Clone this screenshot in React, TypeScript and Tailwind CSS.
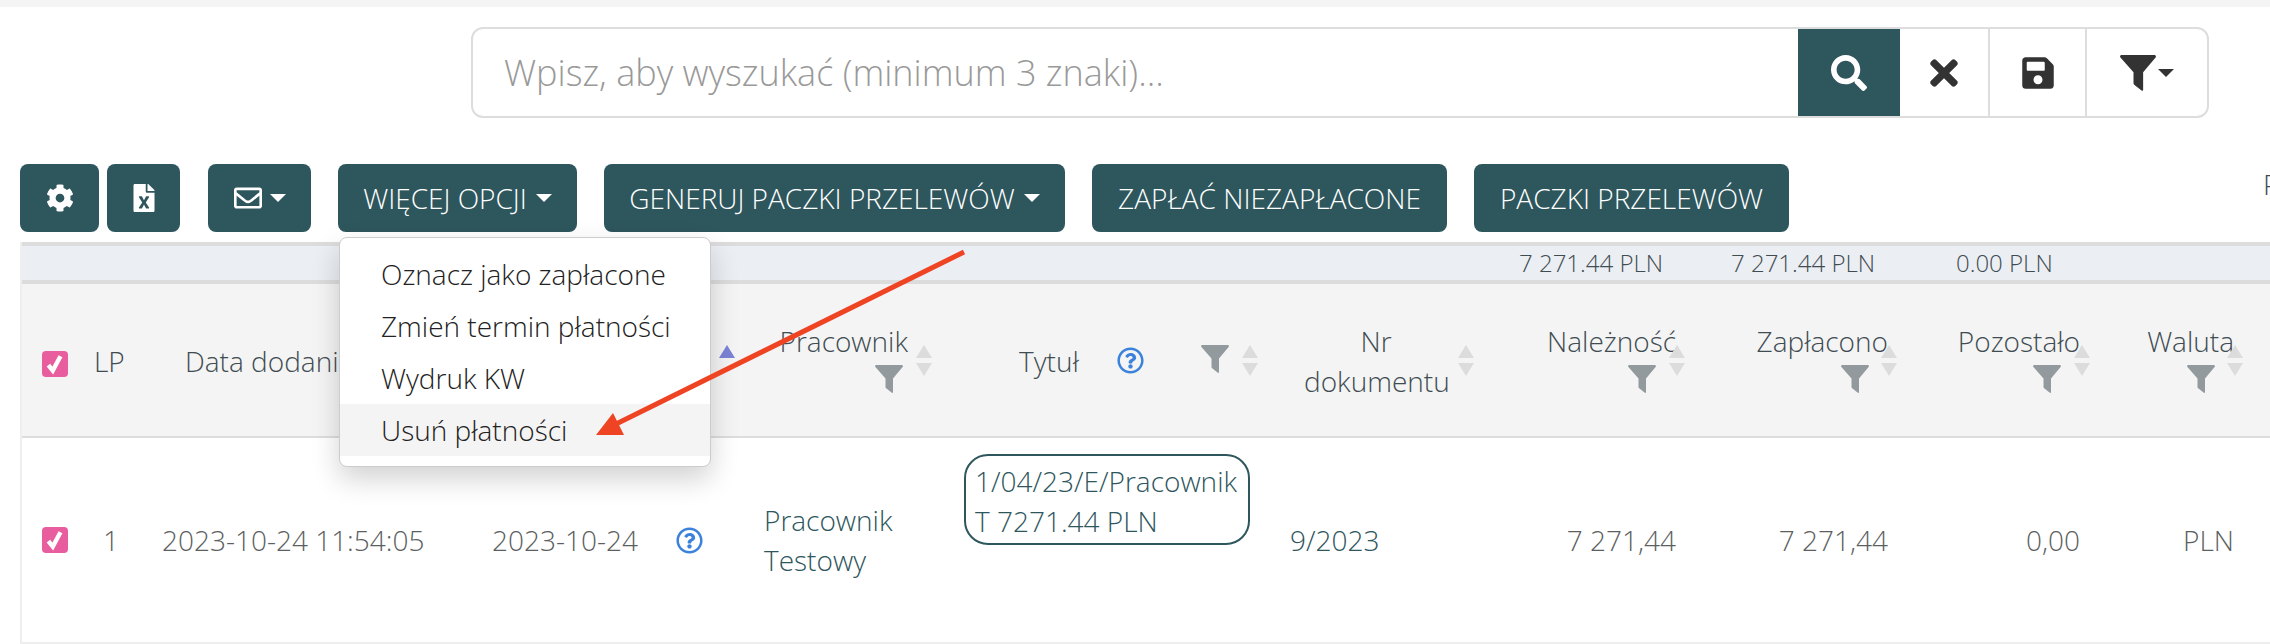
import { FaCog, FaFileExcel, FaRegEnvelope, FaSearch, FaTimes, FaSave, FaRegQuestionCircle } from "react-icons/fa";

const Caret = ({ className = "border-t-white" }: { className?: string }) => (
  <span className={`inline-block w-0 h-0 border-x-[8px] border-x-transparent border-t-[8px] ${className}`} />
);

const Funnel = ({ className = "w-[28px] h-[28px] text-[#929a9d]" }: { className?: string }) => (
  <svg viewBox="0 0 28 28" className={className} fill="currentColor">
    <path d="M1 0H27Q28 0 28 1.500L18 13.500V27Q18 28.500 16.500 27.500L11.500 23.500Q10.500 23 10.500 22V13.500L0 1.500Q0 0 1 0Z" />
  </svg>
);

const Sort = ({ active = false }: { active?: boolean }) => (
  <span className="absolute top-[61px] flex flex-col gap-[5px] right-0">
    <span className={`w-0 h-0 border-x-[8px] border-x-transparent border-b-[13px] ${active ? "border-b-[#7b83d6]" : "border-b-[#dcdcdc]"}`} />
    <span className="w-0 h-0 border-x-[8px] border-x-transparent border-t-[13px] border-t-[#dcdcdc]" />
  </span>
);

const Check = () => (
  <span className="w-[26px] h-[26px] rounded-[4px] bg-[#e85d9e] flex items-center justify-center">
    <svg viewBox="0 0 20 20" className="w-[22px] h-[22px]" fill="none" stroke="white" strokeWidth="4">
      <path d="M4 11L8 16L15 3" />
    </svg>
  </span>
);

const Help = () => <FaRegQuestionCircle className="text-[27px] text-[#3b82dc]" />;

const buttonClass = "h-[68px] shrink-0 bg-[#2e565d] rounded-[8px] text-white flex items-center justify-center uppercase";

const headerCols = [
  { label: "Należność", w: "w-[210px]", pr: "pr-[24px]", filter: "mr-[20px]", sort: "right-[15px]" },
  { label: "Zapłacono", w: "w-[205px]", pr: "pr-[17px]", filter: "mr-[19px]", sort: "right-[8px]" },
  { label: "Pozostało", w: "w-[195px]", pr: "pr-[20px]", filter: "mr-[19px]", sort: "right-[10px]" },
  { label: "Waluta", w: "w-[150px]", pr: "pr-[16px]", filter: "mr-[19px]", sort: "right-[7px]" },
];

const rowValues = [
  { value: "7 271,44", w: "w-[210px]", pr: "pr-[24px]" },
  { value: "7 271,44", w: "w-[205px]", pr: "pr-[17px]" },
  { value: "0,00", w: "w-[195px]", pr: "pr-[20px]" },
  { value: "PLN", w: "w-[150px]", pr: "pr-[16px]" },
];

export default function App() {
  return (
    <div className="relative w-[2270px] h-[644px] overflow-hidden bg-white font-['Open_Sans',sans-serif] font-light text-[28px] leading-[40px]">
      <div className="h-[7px] bg-[#f4f4f4]" />

      {/* Search */}
      <div className="mt-[20px] ml-[471px] w-[1738px] h-[91px] border-2 border-[#dddddd] rounded-[12px] flex overflow-hidden">
        <div className="flex-1 flex items-center pl-[31px] text-[36px] text-[#999999]">Wpisz, aby wyszukać (minimum 3 znaki)...</div>
        <div className="w-[102px] bg-[#2e565d] flex items-center justify-center text-white text-[36px]">
          <FaSearch />
        </div>
        <div className="w-[90px] border-r-2 border-[#dddddd] flex items-center justify-center text-[#333333] text-[40px]">
          <FaTimes />
        </div>
        <div className="w-[97px] border-r-2 border-[#dddddd] flex items-center justify-center text-[#333333] text-[36px]">
          <FaSave />
        </div>
        <div className="w-[120px] flex items-center justify-center gap-[2px] text-[#333333]">
          <Funnel className="w-[36px] h-[36px]" />
          <Caret className="border-t-[#333333]" />
        </div>
      </div>

      {/* Toolbar */}
      <div className="mt-[46px] pl-[20px] flex items-center">
        <button className={`${buttonClass} w-[79px] text-[28px]`}><FaCog /></button>
        <button className={`${buttonClass} w-[73px] ml-[8px] text-[28px]`}><FaFileExcel /></button>
        <button className={`${buttonClass} w-[103px] ml-[28px] gap-[8px] text-[28px]`}><FaRegEnvelope /><Caret /></button>
        <button className={`${buttonClass} w-[239px] ml-[27px] gap-[9px]`}>Więcej opcji <Caret /></button>
        <button className={`${buttonClass} w-[461px] ml-[27px] gap-[9px]`}>Generuj paczki przelewów <Caret /></button>
        <button className={`${buttonClass} w-[355px] ml-[27px]`}>Zapłać niezapłacone</button>
        <button className={`${buttonClass} w-[315px] ml-[27px]`}>Paczki przelewów</button>
        <span className="ml-[474px] self-start shrink-0 whitespace-nowrap text-[#3f4c52]">Pokaż</span>
      </div>

      {/* Table */}
      <div className="mt-[10px] ml-[20px] border-l-2 border-[#eeeeee]">
        <div className="h-[42px] border-y-4 border-[#dcdcdc] bg-[#ebeef3] flex items-center text-[24px] text-[#3f4c52]">
          <span className="ml-[1497px] w-[212px]">7 271.44 PLN</span>
          <span className="w-[225px]">7 271.44 PLN</span>
          <span>0.00 PLN</span>
        </div>

        <div className="h-[154px] bg-[#f4f4f4] border-b-2 border-[#dddddd] flex text-[#3f4c52]">
          <div className="w-[62px] pl-[20px] pt-[67px]"><Check /></div>
          <div className="w-[52px] pl-[10px] pt-[57px]">LP</div>
          <div className="w-[314px] pl-[49px] pt-[57px] whitespace-nowrap">Data dodania</div>
          <div className="relative w-[300px]">
            <span className="absolute top-[61px] right-[15px] w-0 h-0 border-x-[8px] border-x-transparent border-b-[13px] border-b-[#7b83d6]" />
          </div>
          <div className="relative w-[200px] pr-[42px] pt-[37px] flex flex-col items-end">
            <span>Pracownik</span>
            <Funnel className="w-[28px] h-[28px] mt-[4px] mr-[5px] text-[#929a9d]" />
            <span className="absolute inset-y-0 right-[18px] w-[16px]"><Sort /></span>
          </div>
          <div className="relative w-[330px] pl-[69px] pt-[57px]">
            <span>Tytuł</span>
            <span className="absolute left-[167px] top-[63px]"><Help /></span>
            <span className="absolute left-[251px] top-[61px]"><Funnel /></span>
            <span className="absolute inset-y-0 left-[292px] w-[16px]"><Sort /></span>
          </div>
          <div className="relative w-[210px] pt-[37px] pl-[24px]">
            <div className="w-[144px] text-center">Nr dokumentu</div>
            <span className="absolute inset-y-0 right-[16px] w-[16px]"><Sort /></span>
          </div>
          {headerCols.map((col) => (
            <div key={col.label} className={`relative ${col.w} ${col.pr} pt-[37px] flex flex-col items-end`}>
              <span>{col.label}</span>
              <Funnel className={`w-[28px] h-[28px] mt-[4px] text-[#929a9d] ${col.filter}`} />
              <span className={`absolute inset-y-0 w-[16px] ${col.sort}`}><Sort /></span>
            </div>
          ))}
        </div>

        <div className="h-[206px] border-b-2 border-[#eeeeee] flex items-center text-[#5c5f61]">
          <div className="w-[62px] pl-[20px] flex"><Check /></div>
          <div className="w-[52px] pl-[19px]">1</div>
          <div className="w-[314px] pl-[26px] whitespace-nowrap">2023-10-24 11:54:05</div>
          <div className="w-[300px] pl-[42px] flex items-center gap-[38px]">
            <span>2023-10-24</span>
            <Help />
          </div>
          <div className="w-[200px] pl-[14px] text-[#2e565d]">Pracownik<br />Testowy</div>
          <div className="w-[330px] pl-[14px] self-start pt-[16px]">
            <div className="w-[286px] h-[91px] border-2 border-[#2e565d] rounded-[24px] pl-[9px] pt-[5px] text-[#2e565d] whitespace-nowrap">
              1/04/23/E/Pracownik<br />T 7271.44 PLN
            </div>
          </div>
          <div className="w-[210px] pl-[10px] text-[#2e565d]">9/2023</div>
          {rowValues.map((row) => (
            <div key={row.w} className={`${row.w} ${row.pr} text-right`}>{row.value}</div>
          ))}
        </div>
      </div>

      {/* Dropdown menu */}
      <div className="absolute left-[339px] top-[237px] w-[372px] h-[230px] bg-white border border-[#cccccc] rounded-[8px] shadow-[0_12px_28px_rgba(0,0,0,0.18)] pt-[10px] text-[#222222]">
        {["Oznacz jako zapłacone", "Zmień termin płatności", "Wydruk KW", "Usuń płatności"].map((item) => (
          <div key={item} className={`h-[52px] pl-[41px] flex items-center ${item === "Usuń płatności" ? "bg-[#f4f4f4]" : ""}`}>{item}</div>
        ))}
      </div>

      {/* Red annotation arrow */}
      <svg className="absolute inset-0 w-[2270px] h-[644px] pointer-events-none" viewBox="0 0 2270 644">
        <path d="M964 252L612 426" stroke="#ee4423" strokeWidth="5" fill="none" />
        <path d="M596 435L613 413L624 435Z" fill="#ee4423" />
      </svg>
    </div>
  );
}
